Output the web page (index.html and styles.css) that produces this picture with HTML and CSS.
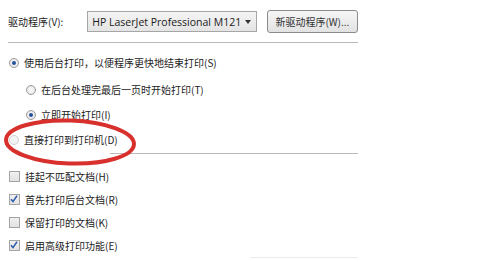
FILE: index.html
```html
<!DOCTYPE html>
<html lang="zh-CN">
<head>
    <meta charset="UTF-8">
    <title>高级</title>
    <link rel="stylesheet" href="styles.css">
</head>
<body>

    <div class="panel">
        <!-- Driver row -->
        <div class="driver-row">
            <span class="label">驱动程序(V):</span>
            <div class="select">
                <span class="select-text">HP LaserJet Professional M121</span>
                <span class="arrow"></span>
            </div>
            <div class="btn">新驱动程序(W)...</div>
        </div>

        <div class="sep"></div>

        <!-- Spool options -->
        <div class="options">
            <div class="opt">
                <span class="radio checked"></span>
                <span>使用后台打印，以便程序更快地结束打印(S)</span>
            </div>
            <div class="opt sub first-sub">
                <span class="radio"></span>
                <span>在后台处理完最后一页时开始打印(T)</span>
            </div>
            <div class="opt sub">
                <span class="radio checked"></span>
                <span>立即开始打印(I)</span>
            </div>
            <div class="opt">
                <span class="radio faint"></span>
                <span>直接打印到打印机(D)</span>
            </div>
            <svg class="mark" width="140" height="52" viewBox="0 0 140 52">
                <ellipse cx="70" cy="26" rx="64" ry="21.5" fill="none" stroke="#d8302c" stroke-width="4" transform="rotate(2 70 26)"/>
            </svg>
        </div>

        <div class="sep short"></div>

        <!-- Checkboxes -->
        <div class="checks">
            <div class="chk-row">
                <span class="chk"></span>
                <span>挂起不匹配文档(H)</span>
            </div>
            <div class="chk-row">
                <span class="chk"><svg width="10" height="10" viewBox="0 0 10 10"><path d="M2 5.2 L4 7.6 L8 1.8" fill="none" stroke="#2b5ba8" stroke-width="1.5"/></svg></span>
                <span>首先打印后台文档(R)</span>
            </div>
            <div class="chk-row">
                <span class="chk"></span>
                <span>保留打印的文档(K)</span>
            </div>
            <div class="chk-row">
                <span class="chk"><svg width="10" height="10" viewBox="0 0 10 10"><path d="M2 5.2 L4 7.6 L8 1.8" fill="none" stroke="#2b5ba8" stroke-width="1.5"/></svg></span>
                <span>启用高级打印功能(E)</span>
            </div>
        </div>

        <div class="sep bottom"></div>
    </div>

</body>
</html>
```

FILE: styles.css
```css
/* Global Styles */
body {
    font-family: "Noto Sans CJK SC", "Liberation Sans", sans-serif;
    font-size: 10px;
    color: #222;
    background-color: #ffffff;
    margin: 0;
    padding: 0;
}
.panel {
    width: 350px;
    padding: 10px 0 0 8px;
}
.driver-row {
    display: flex;
    align-items: center;
    height: 23px;
}
.label {
    width: 80px;
}
.select {
    width: 160px;
    height: 19px;
    border: 1px solid #a6a6a6;
    background: linear-gradient(#f4f4f4, #e4e4e4);
    display: flex;
    align-items: center;
    justify-content: space-between;
    padding: 0 5px 0 4px;
}
.select-text {
    font-family: "Open Sans", "Liberation Sans", sans-serif;
    font-size: 10.5px;
    color: #1a1a1a;
    white-space: nowrap;
}
.arrow {
    width: 0;
    height: 0;
    border-left: 3px solid transparent;
    border-right: 3px solid transparent;
    border-top: 4px solid #333;
}
.btn {
    margin-left: 10px;
    width: 90px;
    height: 21px;
    border: 1px solid #8a8a8a;
    border-radius: 3px;
    background: linear-gradient(#f6f6f6, #e2e2e2);
    display: flex;
    align-items: center;
    justify-content: center;
    color: #333;
}
.sep {
    height: 1px;
    background-color: #b9b9b9;
    margin-top: 9px;
}
.sep.short {
    margin-top: 1px;
    margin-left: 102px;
}
.sep.bottom {
    margin-top: 0;
    margin-left: 242px;
    background-color: #ececec;
}
.options {
    position: relative;
    padding-top: 7px;
}
.opt {
    display: flex;
    align-items: center;
    height: 25px;
    padding-left: 1px;
}
.opt.sub {
    padding-left: 18px;
}
.opt.first-sub {
    margin-top: 2px;
}
.radio {
    width: 8px;
    height: 8px;
    border: 1px solid #9c9c9c;
    border-radius: 50%;
    background: radial-gradient(#ffffff, #dcdcdc);
    margin-right: 5px;
    position: relative;
}
.radio.checked::after {
    content: "";
    position: absolute;
    left: 2px;
    top: 2px;
    width: 4px;
    height: 4px;
    border-radius: 50%;
    background-color: #24519c;
}
.radio.faint {
    border-color: #cfcfcf;
    background: #f3f3f3;
}
.mark {
    position: absolute;
    left: -8px;
    top: 73px;
}
.checks {
    margin-top: 11px;
}
.chk-row {
    display: flex;
    align-items: center;
    height: 23px;
    padding-left: 1px;
}
.chk {
    width: 9px;
    height: 9px;
    border: 1px solid #a4a4a4;
    background: linear-gradient(#f0f0f0, #e2e2e2);
    margin-right: 5px;
    display: flex;
}
.chk svg {
    margin: -1px 0 0 -1px;
}
```
